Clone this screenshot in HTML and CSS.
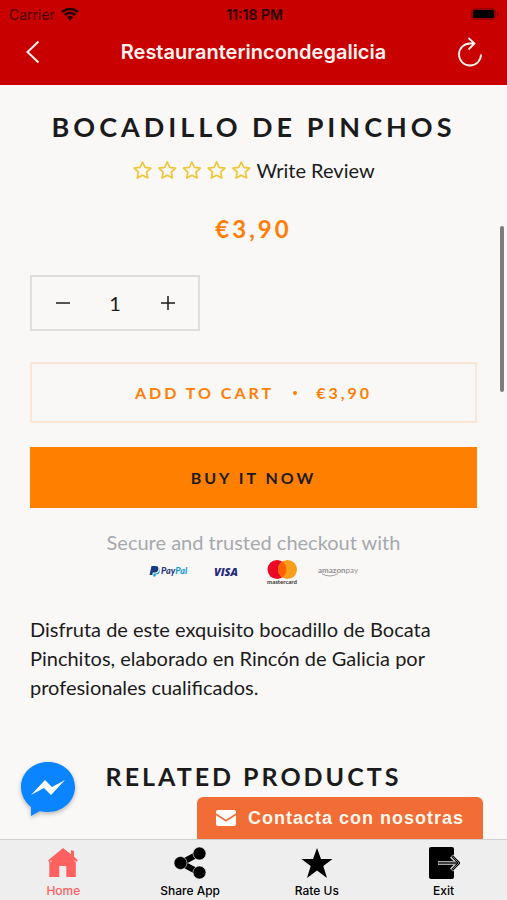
FILE: index.html
```html
<!DOCTYPE html>
<html lang="es">
<head>
<meta charset="utf-8">
<meta name="viewport" content="width=device-width, initial-scale=1">
<title>Restauranterincondegalicia</title>
<link rel="stylesheet" href="styles.css">
</head>
<body>
<div class="app">
  <header class="header">
    <div class="status">
      <div class="status-carrier">Carrier
        <svg class="wifi" viewBox="0 0 18 14" aria-hidden="true"><path d="M1 5.200a11.500 11.500 0 0 1 16 0M3.800 8a7.500 7.500 0 0 1 10.400 0" fill="none" stroke="currentColor" stroke-width="2.500"/><path d="M5.800 10.200a4.600 4.600 0 0 1 6.400 0L9 13.500z" fill="currentColor"/></svg>
      </div>
      <div class="status-time">11:18 PM</div>
      <div class="status-power">
        <svg class="battery" viewBox="0 0 30 14" aria-hidden="true"><rect x="1" y="1" width="25" height="12" rx="3.500" fill="#9b0000"/><rect x="3" y="3" width="21" height="8" rx="1.500" fill="#000"/><path d="M27 5v4c1.500-.4 2-1 2-2s-.5-1.600-2-2z" fill="#8d0000"/></svg>
      </div>
    </div>
    <div class="nav">
      <button class="nav-button" type="button" aria-label="Back">
        <svg class="back" viewBox="0 0 14 24" aria-hidden="true"><path d="M12.500 1.500 1.500 12l11 10.500" fill="none" stroke="currentColor" stroke-width="2"/></svg>
      </button>
      <div class="nav-title">Restauranterincondegalicia</div>
      <button class="nav-button nav-button-end" type="button" aria-label="Reload">
        <svg class="reload" viewBox="0 0 26 30" aria-hidden="true"><path d="M24 17.500A11 11 0 1 1 13 6.500h4.500M11.500 1l6 5.500-6 6" fill="none" stroke="currentColor" stroke-width="1.800"/></svg>
      </button>
    </div>
  </header>

  <main class="page">
    <h1 class="heading">Bocadillo de Pinchos</h1>
    <a class="review" href="#review">
      <svg class="stars" viewBox="0 0 119 20" aria-hidden="true">
        <defs><path id="star" d="m10 2 2.500 5.400 5.900.7-4.300 4.100 1.100 5.800L10 15.200 4.800 18l1.100-5.800L1.600 8.100l5.900-.7z" fill="none" stroke="#eec636" stroke-width="1.700" stroke-linejoin="round"/></defs>
        <use href="#star"/><use href="#star" x="24.700"/><use href="#star" x="49.400"/><use href="#star" x="74.100"/><use href="#star" x="98.800"/>
      </svg>
      <span>Write Review</span>
    </a>
    <p class="price">€3,90</p>

    <div class="quantity">
      <button class="step" type="button" aria-label="Decrease quantity"><svg class="step-icon" viewBox="0 0 14 14" aria-hidden="true"><path d="M0 7h14" stroke="currentColor" stroke-width="1.500"/></svg></button>
      <input class="amount" type="text" inputmode="numeric" value="1" aria-label="Quantity">
      <button class="step" type="button" aria-label="Increase quantity"><svg class="step-icon" viewBox="0 0 14 14" aria-hidden="true"><path d="M0 7h14M7 0v14" stroke="currentColor" stroke-width="1.500"/></svg></button>
    </div>

    <button class="action action-cart" type="button"><span>Add to cart</span><span class="dot"></span><span>€3,90</span></button>
    <button class="action action-buy" type="button">Buy it now</button>

    <p class="secure">Secure and trusted checkout with</p>
    <div class="payments">
      <svg class="payment" viewBox="0 0 42 28" role="img" aria-label="PayPal"><path d="M2.500 7h4c2.300 0 3.300 1.200 2.800 3.400-.5 2.200-1.800 3.100-4.100 3.100H3.800L3.300 16H.5z" fill="#173a80"/><path d="M9.700 9c.6.600.8 1.400.5 2.500-.5 2-1.900 2.900-4 2.900H4.700L4 17.500h2.400l.4-2.200h1c1.700 0 2.500-.8 2.800-2.300.3-1.800.2-3.200-.9-4z" fill="#169bd7"/><text x="12" y="15" class="paypal-text" fill="#253b80">Pay<tspan fill="#169bd7">Pal</tspan></text></svg>
      <svg class="payment" viewBox="0 0 42 28" role="img" aria-label="Visa"><text x="21" y="17" text-anchor="middle" class="visa-text" fill="#262a7c">VISA</text></svg>
      <svg class="payment" viewBox="0 0 42 28" role="img" aria-label="Mastercard"><circle cx="16" cy="10.500" r="9.500" fill="#ea0a25"/><circle cx="26.500" cy="10.500" r="9.500" fill="#f79e1b"/><path d="M21.200 2.600a9.500 9.500 0 0 1 0 15.800 9.500 9.500 0 0 1 0-15.800z" fill="#ff5f00"/><text x="21" y="24.500" text-anchor="middle" class="mastercard-text" fill="#333">mastercard</text></svg>
      <svg class="payment" viewBox="0 0 42 28" role="img" aria-label="Amazon Pay"><text x="21" y="14" text-anchor="middle" class="amazon-text" fill="#8f8f8f"><tspan class="amazon-name">amazon</tspan>pay</text><path d="M5 15q8 4 16-.3" fill="none" stroke="#a5a5a5"/></svg>
    </div>

    <p class="description">Disfruta de este exquisito bocadillo de Bocata Pinchitos, elaborado en Rincón de Galicia por profesionales cualificados.</p>
    <h2 class="heading heading-related">Related products</h2>

    <div class="scroll-thumb"></div>
    <button class="messenger" type="button" aria-label="Messenger">
      <svg class="messenger-icon" viewBox="0 0 56 58" aria-hidden="true"><path d="M28 1C12.500 1 1 12 1 26c0 8 4 15 10 20v9l9-5c3 .8 5 1 8 1 15 0 27-11 27-25S43.500 1 28 1z" fill="#0a84ff"/><path d="m11 34 14-15 7 7 13-7-14 15-7-7z" fill="#fff"/></svg>
    </button>
    <a class="contact" href="#contact">
      <svg class="mail" viewBox="0 0 20 16" aria-hidden="true"><path d="M2 0h16a2 2 0 0 1 2 2v1.300l-10 6.500L0 3.300V2a2 2 0 0 1 2-2z" fill="#fff"/><path d="m0 5.300 10 6.500 10-6.500V14a2 2 0 0 1-2 2H2a2 2 0 0 1-2-2z" fill="#fff"/></svg>
      <span>Contacta con nosotras</span>
    </a>
  </main>

  <nav class="tabs">
    <a class="tab tab-active" href="#home"><svg class="tab-icon" viewBox="0 0 32 32" aria-hidden="true"><path d="M16 1 1 13.500l1.300 1.300V30h10V19h7v11h9.500V14.800l2.200-1.300L27 9.500V4l-3-1-.3 4z" fill="currentColor"/><path d="M3 14.200h2M27 14.200h2M23.500 3v4" stroke="#eee" stroke-width=".7"/></svg>Home</a>
    <a class="tab" href="#share"><svg class="tab-icon" viewBox="0 0 32 32" aria-hidden="true"><path d="M25 6.500 7 16l18 9.500" fill="none" stroke="currentColor" stroke-width="6"/><circle cx="25.500" cy="6.500" r="6.500" fill="currentColor" stroke="#eee" stroke-width=".6"/><circle cx="25.500" cy="25.500" r="6.500" fill="currentColor" stroke="#eee" stroke-width=".6"/><circle cx="6.500" cy="16" r="6.500" fill="currentColor" stroke="#eee" stroke-width=".6"/></svg>Share App</a>
    <a class="tab" href="#rate"><svg class="tab-icon" viewBox="0 0 32 32" aria-hidden="true"><path d="m16 1 4 11h11.500l-9.200 7 3.700 12-10-7.500L6 31l3.700-12L.5 12H12z" fill="currentColor"/></svg>Rate Us</a>
    <a class="tab" href="#exit"><svg class="tab-icon" viewBox="0 0 32 32" aria-hidden="true"><rect y="0" x="1" width="25" height="32" rx="2" fill="currentColor"/><path d="M10 16h20M23.500 9l7 7-7 7" fill="none" stroke="#ddd" stroke-width="4.200"/><path d="M10.500 16H30M24 9l7 7-7 7" fill="none" stroke="currentColor" stroke-width="2.400"/><path d="M11 16h18M24.500 9.500l6.500 6.500-6.500 6.500" fill="none" stroke="#999" stroke-width=".8"/></svg>Exit</a>
  </nav>
</div>
</body>
</html>
```
FILE: styles.css
```css
* { box-sizing: border-box; }

body {
  margin: 0;
  color: #1c1b1b;
  background: #f9f8f7;
  font-family: Lato, "Liberation Sans", sans-serif;
}

button, input { font: inherit; color: inherit; border: 0; padding: 0; background: none; }
a { color: inherit; text-decoration: none; }
svg { display: block; flex: none; }
h1, h2, p { margin: 0; }

.app { display: flex; flex-direction: column; height: 100vh; }

.header {
  flex: none;
  height: 85px;
  background: #c80000;
  font-family: Inter, "Liberation Sans", sans-serif;
}

.status {
  display: grid;
  grid-template-columns: 1fr auto 1fr;
  align-items: center;
  height: 28px;
  padding: 0 7px 0 9px;
  color: #260000;
  font-size: 14px;
}
.status-carrier { display: flex; align-items: center; gap: 6px; color: #4a0000; }
.status-time { font-weight: 600; }
.status-power { display: flex; justify-content: flex-end; }
.wifi { width: 18px; height: 14px; color: #260000; }
.battery { width: 30px; height: 14px; }

.nav { display: flex; align-items: center; height: 48px; padding: 0 24px; color: #fff3f0; }
.nav-button { display: flex; width: 32px; }
.nav-button-end { justify-content: flex-end; }
.nav-title { flex: 1; text-align: center; font-size: 20px; font-weight: 600; }
.back { width: 18px; height: 24px; }
.reload { width: 26px; height: 30px; }

.page {
  position: relative;
  flex: 1;
  min-height: 0;
  overflow: hidden;
  display: flex;
  flex-direction: column;
  padding: 24px 30px 0;
}

.heading {
  text-align: center;
  text-transform: uppercase;
  font-size: 27px;
  line-height: 36px;
  font-weight: 700;
  letter-spacing: 4px;
}

.review {
  display: flex;
  align-items: center;
  justify-content: center;
  gap: 4px;
  margin-top: 10px;
  font-size: 20px;
  line-height: 30px;
}
.stars { width: 120px; height: 20px; }

.price {
  margin-top: 28px;
  color: #ff7e05;
  text-align: center;
  font-size: 24px;
  line-height: 32px;
  font-weight: 700;
  letter-spacing: 3px;
}

.quantity {
  display: flex;
  align-items: center;
  width: 170px;
  height: 56px;
  margin-top: 30px;
  border: 2px solid #dfdedd;
}
.step { flex: 1; display: flex; align-items: center; justify-content: center; height: 100%; }
.step-icon { width: 14px; height: 14px; }
.amount { width: 44px; text-align: center; font-size: 20px; }

.action {
  display: flex;
  align-items: center;
  justify-content: center;
  height: 61px;
  text-transform: uppercase;
  font-size: 16px;
  font-weight: 700;
  letter-spacing: 3px;
}
.action-cart { gap: 19px; margin-top: 31px; color: #ff7e05; border: 2px solid #fce6d5; }
.action-buy { margin-top: 24px; background: #ff8000; }
.dot { width: 4px; height: 4px; border-radius: 50%; background: currentColor; }

.secure { margin-top: 20px; color: #a5a9ad; text-align: center; font-size: 20px; line-height: 28px; }

.payments { display: flex; justify-content: center; gap: 14px; margin-top: 3px; }
.payment { width: 42px; height: 28px; }
.paypal-text { font: italic 900 9px Lato, sans-serif; }
.visa-text { font: italic 800 11px "Open Sans", sans-serif; }
.mastercard-text { font: 700 6px Lato, sans-serif; }
.amazon-text { font: 400 8px Lato, sans-serif; }
.amazon-name { font-weight: 700; }

.description { margin-top: 28px; font-size: 20px; line-height: 29px; }
.heading-related { margin-top: 56px; font-size: 25px; letter-spacing: 3px; }

.scroll-thumb {
  position: absolute;
  top: 141px;
  right: 3px;
  width: 4px;
  height: 166px;
  border-radius: 2px;
  background: #7d7c7c;
}

.messenger { position: absolute; left: 20px; bottom: 20px; filter: drop-shadow(0 2px 2px #0004); }
.messenger-icon { width: 56px; height: 58px; }

.contact {
  position: absolute;
  right: 24px;
  bottom: 0;
  display: flex;
  align-items: center;
  gap: 12px;
  height: 42px;
  padding: 0 19px;
  border-radius: 6px 6px 0 0;
  background: #f26c36;
  color: #fff8ed;
  font: 700 18px "Liberation Sans", sans-serif;
  letter-spacing: 1px;
}
.mail { width: 20px; height: 16px; }

.tabs {
  flex: none;
  display: grid;
  grid-template-columns: repeat(4, 1fr);
  height: 61px;
  border-top: 1px solid #cfcfcf;
  background: #eee;
  color: #000;
  font: 500 12px Inter, "Liberation Sans", sans-serif;
}
.tab { display: flex; flex-direction: column; align-items: center; gap: 4px; padding-top: 7px; }
.tab-active { color: #ff6060; }
.tab-icon { width: 32px; height: 32px; }
```
